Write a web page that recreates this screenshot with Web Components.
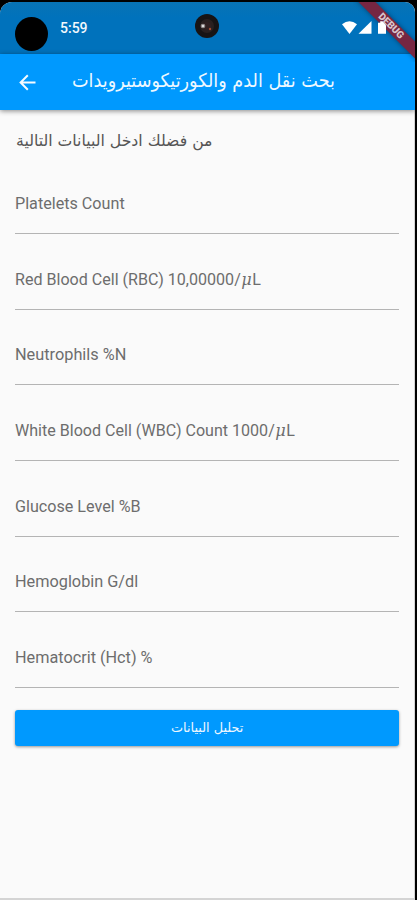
<!DOCTYPE html>
<html lang="ar">
<head>
<meta charset="utf-8">
<title>بحث نقل الدم</title>
<style>
html,body{margin:0;height:100%;background:#000}
body{font-family:Roboto,"DejaVu Sans",sans-serif;overflow:hidden}
</style>
</head>
<body>
<phone-screen>
  <status-bar slot="top"></status-bar>
  <app-bar slot="top"><fit-text width="263" dir="rtl">بحث نقل الدم والكورتيكوستيرويدات</fit-text></app-bar>
  <form-intro><fit-text width="197" dir="rtl">من فضلك ادخل البيانات التالية</fit-text></form-intro>
  <form-field><fit-text width="110">Platelets Count</fit-text></form-field>
  <form-field><fit-text width="246">Red Blood Cell (RBC) 10,00000/𝜇L</fit-text></form-field>
  <form-field><fit-text width="111">Neutrophils %N</fit-text></form-field>
  <form-field><fit-text width="280">White Blood Cell (WBC) Count 1000/𝜇L</fit-text></form-field>
  <form-field><fit-text width="126">Glucose Level %B</fit-text></form-field>
  <form-field><fit-text width="123">Hemoglobin G/dl</fit-text></form-field>
  <form-field><fit-text width="137">Hematocrit (Hct) %</fit-text></form-field>
  <submit-button><fit-text width="72" dir="rtl">تحليل البيانات</fit-text></submit-button>
</phone-screen>
<script>
const define = (name, html, init) => customElements.define(name, class extends HTMLElement {
  constructor() { super(); this.attachShadow({ mode: 'open' }).innerHTML = html; }
  connectedCallback() { if (init) init(this); }
});

define('phone-screen', `<style>
:host{display:flex;flex-direction:column;box-sizing:border-box;width:415px;height:900px;padding-top:2px;background:#000}
.screen{flex:1;display:flex;flex-direction:column;background:#fafafa;border-radius:12px 10px 0 0;overflow:hidden;box-shadow:inset -1px -2px #d4d4d4;position:relative}
.body{display:flex;flex-direction:column;padding:0 16px 0 15px}
debug-banner{position:absolute;right:0;top:0;z-index:2}
</style><div class="screen"><slot name="top"></slot><div class="body"><slot></slot></div><debug-banner></debug-banner></div>`);

define('status-bar', `<style>
:host{display:block;height:52px;background:linear-gradient(#0873b4,#0072bc 30%,#0072bc);color:#f2f8fc}
.row{display:flex;align-items:center;height:52px;box-sizing:border-box;padding-left:15px}
.cut{width:33px;height:34px;border-radius:50%;background:#000;margin-top:11px}
.time{margin-left:12px;font:500 14px/20px Roboto,sans-serif;width:28px;margin-top:0}
svg{display:block}
.cam{margin-left:107px;margin-top:-5px}
.icons{margin-left:123px;margin-top:0;position:relative;z-index:3}
</style><div class="row"><span class="cut"></span><span class="time">5:59</span>
<svg class="cam" width="24" height="24" viewBox="0 0 24 24"><circle cx="12" cy="12" r="12" fill="#171415"/><circle cx="12" cy="12" r="7" fill="#292020"/><circle cx="12" cy="12" r="4" fill="#302122"/><circle cx="8" cy="12" r="2.3" fill="#918b8b"/><circle cx="8" cy="12" r="1.1" fill="#eee"/><circle cx="15" cy="15" r="1.2" fill="#a04c35"/></svg>
<svg class="icons" width="46" height="16" viewBox="0 0 46 16" fill="#fff"><path d="M0 4.2Q7.5-1.8 15 4.2L7.5 14z"/><path d="M29.5 1v12.8H16.5z"/><path d="M36 2.7h2.2V1.2H40.5L44 5.5v8.3h-8z"/></svg></div>`);

define('debug-banner', `<style>
:host{display:block;width:62px;height:60px;overflow:hidden;pointer-events:none}
div{position:absolute;left:-17.5px;top:17.5px;width:110px;height:12px;transform:rotate(45deg);background:#762642;box-shadow:0 0 5px #0006;color:#d9c4cb;font:900 10px/12px Roboto,sans-serif;text-align:center;letter-spacing:-.1px}
</style><div>DEBUG</div>`);

define('app-bar', `<style>
:host{display:flex;box-sizing:border-box;height:56px;background:#0099fe;color:#eef8ff;align-items:center;padding-left:19px;box-shadow:0 1px 5px #0007;z-index:1;font:500 19px/28px "DejaVu Sans",sans-serif}
svg{margin-right:36px;margin-top:1px}
::slotted(*){margin-top:-4px}
</style><svg width="17" height="17" viewBox="0 0 17 17" fill="none" stroke="#f5fbff" stroke-width="2"><path d="M16.5 8.5H2M8.8 1.3 1.6 8.5l7.2 7.2"/></svg><slot></slot>`);

define('form-intro', `<style>
:host{display:flex;height:48.35px;box-sizing:border-box;padding:18px 0 0 .5px;color:#555;font:16px/26px "DejaVu Sans",sans-serif}
</style><slot></slot>`);

define('form-field', `<style>
:host{display:flex;flex-direction:column;height:75.65px;box-sizing:border-box;border-bottom:1px solid #b4b4b4;padding:35.6px 0 0 0;color:#6d6d6d;font:16px/20px Roboto,"DejaVu Math TeX Gyre","DejaVu Serif",serif}
</style><slot></slot>`);

define('submit-button', `<style>
:host{display:flex;justify-content:center;height:36px;margin-top:22px;border-radius:3px;background:#0099fe;color:#edf7ff;box-shadow:0 1px 3px #0006;font:500 13px/35px "DejaVu Sans",sans-serif}
</style><slot></slot>`);

/* Text that is stretched horizontally to a given width. */
define('fit-text', `<style>
:host{display:block;white-space:nowrap;flex:none}
span{display:inline-block;transform-origin:0 50%}
:host([dir=rtl]) span{transform-origin:100% 50%}
</style><span><slot></slot></span>`, el => {
  const w = +el.getAttribute('width'), s = el.shadowRoot.querySelector('span');
  el.style.width = w + 'px';
  s.style.transform = 'scaleX(' + w / s.offsetWidth + ')';
});
</script>
</body>
</html>
